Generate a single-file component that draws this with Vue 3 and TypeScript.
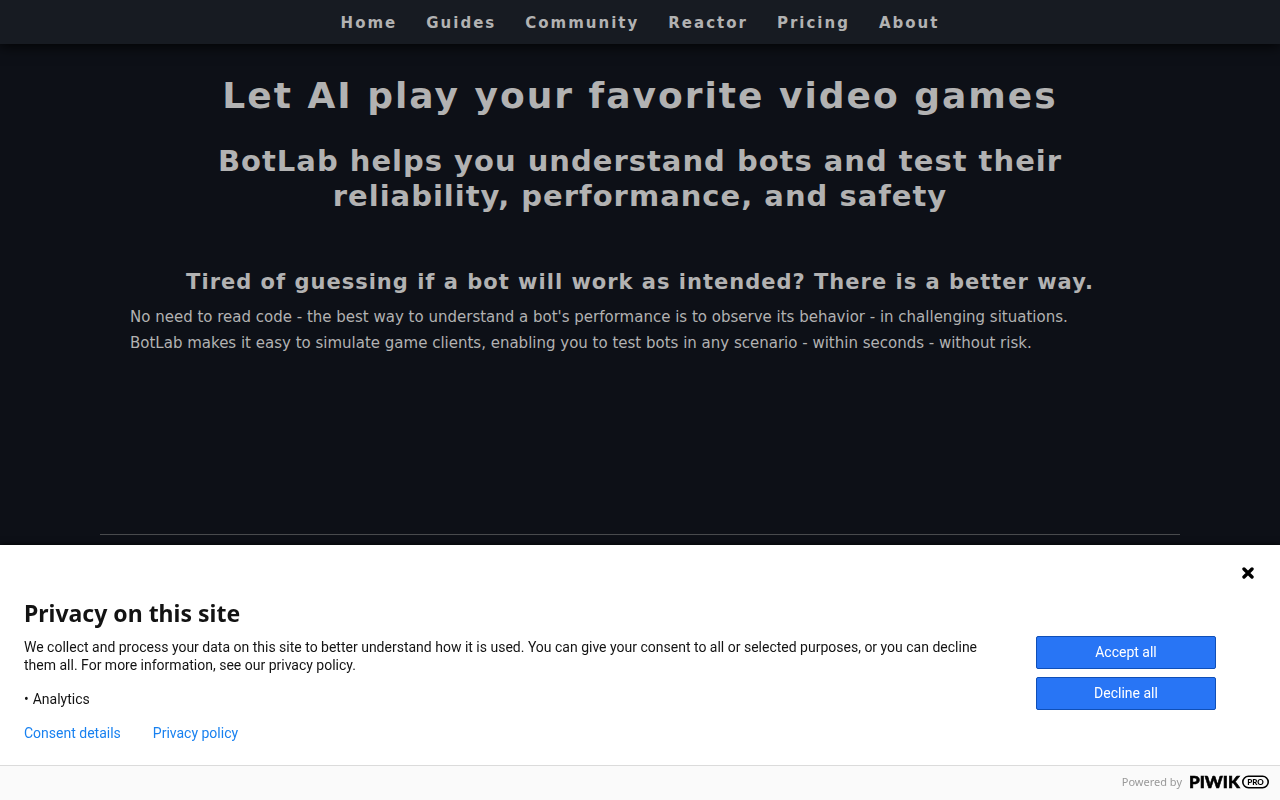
<script setup lang="ts">
import { ref } from 'vue'

interface LinkItem {
  label: string
  href: string
}

const navLinks: LinkItem[] = [
  { label: 'Home', href: '#home' },
  { label: 'Guides', href: '#guides' },
  { label: 'Community', href: '#community' },
  { label: 'Reactor', href: '#reactor' },
  { label: 'Pricing', href: '#pricing' },
  { label: 'About', href: '#about' },
]

const purposes: string[] = ['Analytics']
const consentOpen = ref(true)

function closeConsent(): void {
  consentOpen.value = false
}
</script>

<template>
  <div class="page">
    <nav class="nav">
      <a v-for="link in navLinks" :key="link.label" :href="link.href">{{ link.label }}</a>
    </nav>

    <main class="content">
      <h1>Let AI play your favorite video games</h1>
      <h2>BotLab helps you understand bots and test their reliability, performance, and safety</h2>
      <section class="intro">
        <h3>Tired of guessing if a bot will work as intended? There is a better way.</h3>
        <p>No need to read code - the best way to understand a bot's performance is to observe its behavior - in challenging situations.</p>
        <p>BotLab makes it easy to simulate game clients, enabling you to test bots in any scenario - within seconds - without risk.</p>
      </section>
      <hr />
    </main>

    <div v-if="consentOpen" class="consent" role="dialog" aria-labelledby="consent-title">
      <div class="consent-top">
        <button class="close" type="button" aria-label="Close" @click="closeConsent">
          <svg width="12" height="12" viewBox="0 0 12 12">
            <path d="M2 2L10 10M10 2L2 10" fill="none" stroke="#000" stroke-width="3.4" stroke-linecap="round" />
          </svg>
        </button>
      </div>
      <div class="consent-body">
        <div class="consent-text">
          <h4 id="consent-title">Privacy on this site</h4>
          <p>We collect and process your data on this site to better understand how it is used. You can give your consent to all or selected purposes, or you can decline them all. For more information, see our privacy policy.</p>
          <ul>
            <li v-for="purpose in purposes" :key="purpose">{{ purpose }}</li>
          </ul>
          <div class="consent-links">
            <a href="#consent-details">Consent details</a>
            <a href="#privacy-policy">Privacy policy</a>
          </div>
        </div>
        <div class="consent-actions">
          <button type="button" @click="closeConsent">Accept all</button>
          <button type="button" @click="closeConsent">Decline all</button>
        </div>
      </div>
      <footer class="consent-footer">
        <span>Powered by</span>
        <a class="brand" href="#piwik-pro">
          <svg width="80" height="24" viewBox="0 0 80 24">
            <text class="brand-name" x="0" y="18">PIWIK</text>
            <rect x="53.8" y="6.3" width="25.4" height="11.4" rx="5.7" fill="none" stroke="#000" stroke-width="1.6" />
            <text class="brand-pill" x="66.5" y="15" text-anchor="middle">PRO</text>
          </svg>
        </a>
      </footer>
    </div>
  </div>
</template>

<style>
body {
  margin: 0;
  background: #0d1017;
}
</style>

<style scoped>
.page {
  min-height: 100vh;
  background: #0d1017;
  color: #b2b2b2;
  font-family: "DejaVu Sans", sans-serif;
}

.nav {
  display: flex;
  justify-content: center;
  gap: 29px;
  height: 44px;
  align-items: center;
  background: #171b22;
  box-shadow: 0 0 14px 1px #000;
}

.nav a {
  padding-top: 1px;
  color: inherit;
  text-decoration: none;
  font-size: 15px;
  font-weight: 700;
  letter-spacing: 2px;
}

.content {
  max-width: 1080px;
  margin: 0 auto;
  padding-top: 30px;
}

h1,
h2,
h3 {
  margin: 0;
  text-align: center;
  font-weight: 700;
}

h1 {
  font-size: 36px;
  line-height: 44px;
  letter-spacing: 2px;
}

h2 {
  max-width: 900px;
  margin: 26px auto 0;
  font-size: 29px;
  line-height: 35px;
  letter-spacing: 1px;
}

.intro {
  min-height: 266px;
  margin-top: 54px;
  padding: 0 30px;
}

h3 {
  margin-bottom: 8px;
  font-size: 21px;
  line-height: 28px;
  letter-spacing: 1px;
}

.intro p {
  margin: 0;
  font-size: 15px;
  line-height: 26px;
}

hr {
  margin: 0;
  border: 0;
  border-top: 1px solid #484a4d;
}

.consent {
  position: fixed;
  right: 0;
  bottom: 0;
  left: 0;
  background: #fff;
  color: #131313;
  font-family: Roboto, sans-serif;
  font-size: 14px;
  line-height: 18px;
  box-shadow: 0 0 6px #000;
}

.consent-top {
  display: flex;
  justify-content: flex-end;
  padding: 22px 26px 0;
}

.close {
  display: flex;
  padding: 0;
  border: 0;
  background: none;
}

.consent-body {
  display: flex;
  justify-content: space-between;
  padding: 19px 64px 23px 24px;
}

.consent-text {
  flex: 1;
  max-width: 980px;
}

h4 {
  margin: 0 0 10px;
  font-family: "Noto Sans", sans-serif;
  font-size: 23px;
  line-height: 30px;
}

.consent-text p {
  margin: 0;
}

ul {
  margin: 16px 0;
  padding: 0;
  list-style: none;
}

li::before {
  content: "•";
  margin-right: 4px;
}

.consent-links {
  display: flex;
  gap: 32px;
}

.consent-links a {
  color: #1881f0;
  text-decoration: none;
}

.consent-actions {
  display: flex;
  flex-direction: column;
  gap: 8px;
  width: 180px;
  padding-top: 38px;
}

.consent-actions button {
  height: 33px;
  padding: 0 0 2px;
  border: 1px solid #0f4fb8;
  border-radius: 2px;
  background: #2875f5;
  color: #fff;
  font: inherit;
}

.consent-footer {
  display: flex;
  justify-content: flex-end;
  align-items: center;
  gap: 7px;
  height: 32px;
  padding: 0 11px 2px;
  border-top: 1px solid #dbdbdb;
  background: #fafafa;
  color: #999;
  font-family: "Noto Sans", sans-serif;
  font-size: 11px;
}

.brand {
  display: flex;
}

.brand-name {
  font-family: Lato, sans-serif;
  font-size: 17px;
  font-weight: 900;
  stroke: #000;
  stroke-width: 0.6px;
}

.brand-pill {
  font-family: Lato, sans-serif;
  font-size: 8px;
  font-weight: 900;
}
</style>
